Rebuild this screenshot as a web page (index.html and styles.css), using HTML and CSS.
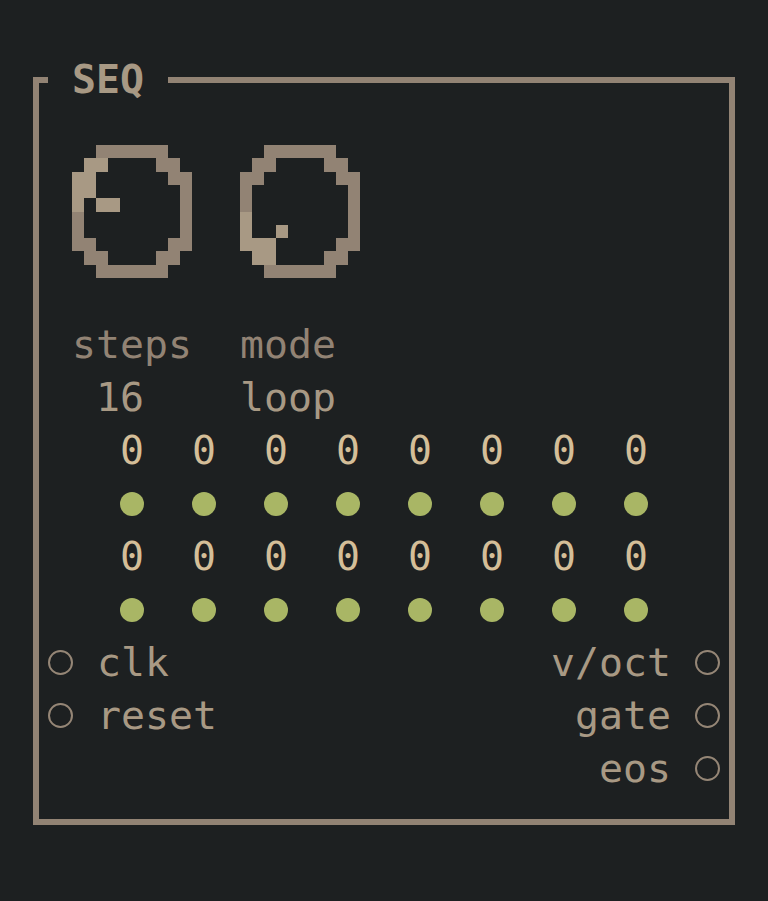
FILE: index.html
```html
<!DOCTYPE html>
<html lang="en">
<head>
<meta charset="utf-8">
<title>SEQ</title>
<link rel="stylesheet" href="styles.css">
</head>
<body>
<fieldset class="panel">
  <legend class="title"> SEQ </legend>
  <div class="knobs">
    <svg class="knob" viewBox="0 0 10 10" preserveAspectRatio="none" shape-rendering="crispEdges">
      <g fill="#928374">
        <rect x="2" y="0" width="6" height="1"/>
        <rect x="7" y="1" width="2" height="1"/>
        <rect x="8" y="2" width="2" height="1"/>
        <rect x="9" y="3" width="1" height="4"/>
        <rect x="0" y="5" width="1" height="2"/>
        <rect x="0" y="7" width="2" height="1"/>
        <rect x="8" y="7" width="2" height="1"/>
        <rect x="1" y="8" width="2" height="1"/>
        <rect x="7" y="8" width="2" height="1"/>
        <rect x="2" y="9" width="6" height="1"/>
      </g>
      <g fill="#a89984">
        <rect x="1" y="1" width="2" height="1"/>
        <rect x="0" y="2" width="2" height="2"/>
        <rect x="0" y="4" width="1" height="1"/>
        <rect x="2" y="4" width="2" height="1"/>
      </g>
    </svg>
    <svg class="knob" viewBox="0 0 10 10" preserveAspectRatio="none" shape-rendering="crispEdges">
      <g fill="#928374">
        <rect x="2" y="0" width="6" height="1"/>
        <rect x="1" y="1" width="2" height="1"/>
        <rect x="7" y="1" width="2" height="1"/>
        <rect x="0" y="2" width="2" height="1"/>
        <rect x="8" y="2" width="2" height="1"/>
        <rect x="0" y="3" width="1" height="2"/>
        <rect x="9" y="3" width="1" height="4"/>
        <rect x="8" y="7" width="2" height="1"/>
        <rect x="7" y="8" width="2" height="1"/>
        <rect x="2" y="9" width="6" height="1"/>
      </g>
      <g fill="#a89984">
        <rect x="0" y="5" width="1" height="2"/>
        <rect x="3" y="6" width="1" height="1"/>
        <rect x="0" y="7" width="3" height="1"/>
        <rect x="1" y="8" width="2" height="1"/>
      </g>
    </svg>
  </div>
  <div class="row label"> steps  mode</div>
  <div class="row value">  16    loop</div>
  <div class="row steps">
    <span>0</span><span>0</span><span>0</span><span>0</span><span>0</span><span>0</span><span>0</span><span>0</span>
  </div>
  <div class="row steps">
    <span class="dot"></span><span class="dot"></span><span class="dot"></span><span class="dot"></span><span class="dot"></span><span class="dot"></span><span class="dot"></span><span class="dot"></span>
  </div>
  <div class="row steps">
    <span>0</span><span>0</span><span>0</span><span>0</span><span>0</span><span>0</span><span>0</span><span>0</span>
  </div>
  <div class="row steps">
    <span class="dot"></span><span class="dot"></span><span class="dot"></span><span class="dot"></span><span class="dot"></span><span class="dot"></span><span class="dot"></span><span class="dot"></span>
  </div>
  <div class="row ports">
    <div class="port"><span class="jack"></span><span>clk</span></div>
    <div class="port"><span>v/oct</span><span class="jack"></span></div>
  </div>
  <div class="row ports">
    <div class="port"><span class="jack"></span><span>reset</span></div>
    <div class="port"><span>gate</span><span class="jack"></span></div>
  </div>
  <div class="row ports">
    <div class="port"></div>
    <div class="port"><span>eos</span><span class="jack"></span></div>
  </div>
</fieldset>
</body>
</html>
```
FILE: styles.css
```css
html, body {
  margin: 0;
  padding: 0;
  background: #1d2021;
}

body {
  width: 768px;
  height: 901px;
  overflow: hidden;
  font-family: "DejaVu Sans Mono", "Liberation Mono", monospace;
  font-size: 39.86px;
  line-height: 53px;
  color: #a89984;
}

.panel {
  box-sizing: border-box;
  width: 702px;
  margin: 53px 0 0 33px;
  padding: 0 9px 24px 9px;
  border: 6px solid #928374;
  min-width: 0;
}

.title {
  padding: 0;
  margin: 0;
  white-space: pre;
  font-weight: bold;
  line-height: 53px;
  color: #a89984;
}

.knobs {
  height: 212px;
  box-sizing: border-box;
  padding: 39px 0 0 24px;
  display: flex;
  gap: 48px;
  align-items: flex-start;
}

.knob {
  display: block;
  width: 120px;
  height: 133px;
}

.row {
  height: 53px;
  white-space: pre;
}

.label {
  color: #928374;
}

.value {
  color: #a89984;
}

.steps {
  display: grid;
  grid-template-columns: repeat(8, 24px);
  column-gap: 48px;
  padding-left: 72px;
  align-items: center;
  justify-items: center;
  color: #d4be98;
}

.dot {
  width: 24px;
  height: 24px;
  border-radius: 50%;
  background: #a9b665;
}

.ports {
  display: flex;
  justify-content: space-between;
  align-items: center;
  color: #a89984;
}

.port {
  display: flex;
  align-items: center;
  gap: 24px;
}

.jack {
  box-sizing: border-box;
  width: 25px;
  height: 25px;
  border: 2px solid #958676;
  border-radius: 50%;
}
```
